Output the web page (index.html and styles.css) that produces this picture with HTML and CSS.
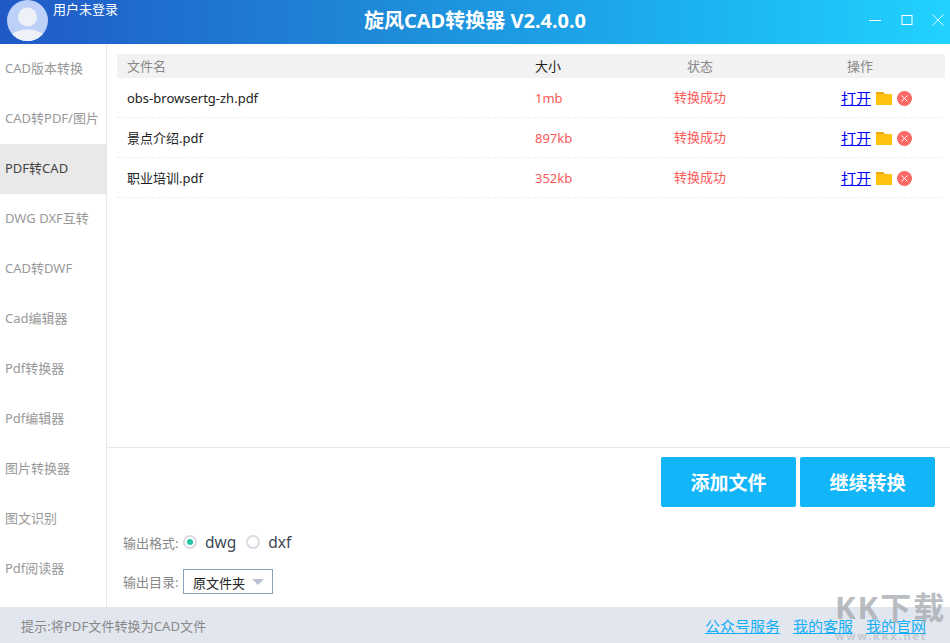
FILE: index.html
```html
<!DOCTYPE html>
<html lang="zh">
<head>
<meta charset="utf-8">
<title>旋风CAD转换器</title>
<link rel="stylesheet" href="styles.css">
</head>
<body>
<div class="app">
  <header class="titlebar">
    <div class="user">
      <svg class="avatar" viewBox="0 0 41 41"><defs><clipPath id="c"><circle cx="20.5" cy="20.5" r="20.5"/></clipPath></defs><circle cx="20.5" cy="20.5" r="20.5" fill="#bcd0f8"/><g clip-path="url(#c)"><circle cx="20.5" cy="17" r="9.5" fill="#eef2f8"/><ellipse cx="20.5" cy="38" rx="17" ry="8.5" fill="#eef2f8"/></g></svg>
      <span class="username">用户未登录</span>
    </div>
    <h1 class="apptitle">旋风CAD转换器 V2.4.0.0</h1>
    <div class="winctl">
      <svg class="wicon" viewBox="0 0 12 12"><path d="M0 6.5H12" stroke="#fff" fill="none"/></svg>
      <svg class="wicon" viewBox="0 0 12 12"><rect x="1" y="1.5" width="10" height="9" stroke="#fff" fill="none"/></svg>
      <svg class="wicon" viewBox="0 0 12 12"><path d="M0.5 .5L11.5 11.5M11.5 .5L.5 11.5" stroke="#fff" fill="none" stroke-width=".8"/></svg>
    </div>
  </header>
  <div class="body">
    <nav class="sidebar">
      <div class="navitem">CAD版本转换</div>
      <div class="navitem">CAD转PDF/图片</div>
      <div class="navitem active">PDF转CAD</div>
      <div class="navitem">DWG DXF互转</div>
      <div class="navitem">CAD转DWF</div>
      <div class="navitem">Cad编辑器</div>
      <div class="navitem">Pdf转换器</div>
      <div class="navitem">Pdf编辑器</div>
      <div class="navitem">图片转换器</div>
      <div class="navitem">图文识别</div>
      <div class="navitem">Pdf阅读器</div>
    </nav>
    <main class="main">
      <section class="files">
        <div class="thead">
          <span class="c-name">文件名</span>
          <span class="c-size dark">大小</span>
          <span class="c-state">状态</span>
          <span class="c-op">操作</span>
        </div>
        <div class="row">
          <span class="c-name">obs-browsertg-zh.pdf</span>
          <span class="c-size red">1mb</span>
          <span class="c-state red">转换成功</span>
          <span class="actions"><a class="open" href="#">打开</a><svg class="folder" viewBox="0 0 16 13"><path d="M0 0H7L9 2H16V13H0Z" fill="#ffc20e"/><path d="M0 0H7L9 2H0Z" fill="#eaa90a"/></svg><svg class="del" viewBox="0 0 15 15"><circle cx="7.5" cy="7.5" r="7.5" fill="#fb6a64"/><path d="M4.5 4.5L10.5 10.5M10.5 4.5L4.5 10.5" stroke="#fff"/></svg></span>
        </div>
        <div class="row">
          <span class="c-name">景点介绍.pdf</span>
          <span class="c-size red">897kb</span>
          <span class="c-state red">转换成功</span>
          <span class="actions"><a class="open" href="#">打开</a><svg class="folder" viewBox="0 0 16 13"><path d="M0 0H7L9 2H16V13H0Z" fill="#ffc20e"/><path d="M0 0H7L9 2H0Z" fill="#eaa90a"/></svg><svg class="del" viewBox="0 0 15 15"><circle cx="7.5" cy="7.5" r="7.5" fill="#fb6a64"/><path d="M4.5 4.5L10.5 10.5M10.5 4.5L4.5 10.5" stroke="#fff"/></svg></span>
        </div>
        <div class="row">
          <span class="c-name">职业培训.pdf</span>
          <span class="c-size red">352kb</span>
          <span class="c-state red">转换成功</span>
          <span class="actions"><a class="open" href="#">打开</a><svg class="folder" viewBox="0 0 16 13"><path d="M0 0H7L9 2H16V13H0Z" fill="#ffc20e"/><path d="M0 0H7L9 2H0Z" fill="#eaa90a"/></svg><svg class="del" viewBox="0 0 15 15"><circle cx="7.5" cy="7.5" r="7.5" fill="#fb6a64"/><path d="M4.5 4.5L10.5 10.5M10.5 4.5L4.5 10.5" stroke="#fff"/></svg></span>
        </div>
      </section>
      <section class="panel">
        <div class="buttons">
          <button class="btn">添加文件</button>
          <button class="btn">继续转换</button>
        </div>
        <div class="opt format">
          <span class="optlabel">输出格式:</span>
          <span class="radio on"></span><span class="rlabel">dwg</span>
          <span class="radio"></span><span class="rlabel">dxf</span>
        </div>
        <div class="opt dir">
          <span class="optlabel">输出目录:</span>
          <span class="select">原文件夹<i class="caret"></i></span>
        </div>
      </section>
    </main>
  </div>
  <footer class="footer">
    <span class="hint">提示:将PDF文件转换为CAD文件</span>
    <div class="links"><a href="#">公众号服务</a><a href="#">我的客服</a><a href="#">我的官网</a></div>
    <div class="watermark"><span class="wm-big">KK下载</span><span class="wm-small">www.kkx.net</span></div>
  </footer>
</div>
</body>
</html>
```
FILE: styles.css
```css
* { box-sizing: border-box; }
html, body { margin: 0; padding: 0; }
body { font-family: "Noto Sans", "Noto Sans CJK SC", sans-serif; background: #fff; }
.app { width: 950px; height: 643px; display: flex; flex-direction: column; overflow: hidden; position: relative; }

.titlebar { height: 44px; flex: none; display: flex; align-items: center; position: relative; background: linear-gradient(90deg, #2059c6 0%, #1e8ad8 40%, #1cb4f2 75%, #21d2ff 100%); color: #fff; }
.user { display: flex; align-items: flex-start; padding-left: 7px; height: 44px; }
.avatar { width: 41px; height: 41px; flex: none; }
.username { font-size: 13px; line-height: 18px; margin-left: 5px; }
.apptitle { position: absolute; left: 0; right: 0; top: 0; margin: 0; text-align: center; font-size: 20px; line-height: 42px; font-weight: 700; }
.winctl { margin-left: auto; display: flex; gap: 19.5px; padding-right: 6px; margin-bottom: 4px; position: relative; }
.wicon { width: 12px; height: 12px; display: block; }

.body { flex: 1; display: flex; min-height: 0; }
.sidebar { width: 107px; flex: none; border-right: 1px solid #e8e8e8; }
.navitem { height: 50px; line-height: 49px; padding-left: 5px; font-size: 13px; color: #999; white-space: nowrap; }
.navitem.active { background: #e9e9e9; color: #444; }

.main { flex: 1; display: flex; flex-direction: column; min-width: 0; }
.files { flex: 1; padding: 10px 5px 0 10px; }
.thead { height: 24px; background: #f2f2f2; display: flex; align-items: center; font-size: 13px; color: #888; line-height: 20px; }
.row { height: 40px; display: flex; align-items: center; font-size: 13px; line-height: 20px; color: #222; border-bottom: 1px dashed #eee; margin-right: 3px; }
.c-name { width: 418px; padding-left: 10px; flex: none; }
.c-size { width: 124px; flex: none; }
.c-state { width: 82px; flex: none; text-align: center; }
.row .c-state { padding-bottom: 2px; }
.c-op { flex: none; padding-left: 106px; }
.dark { color: #222; }
.red { color: #fb5a5a; }
.actions { display: flex; align-items: center; padding-left: 100px; flex: none; }
.open { color: #0000ff; font-size: 15px; text-decoration: underline; }
.folder { width: 16px; height: 13px; margin-left: 5px; margin-top: 1px; }
.del { width: 15px; height: 15px; margin-left: 5px; margin-top: 1px; }

.panel { height: 160px; flex: none; border-top: 1px solid #e8e8e8; }
.buttons { display: flex; justify-content: flex-end; gap: 4px; padding: 9px 15px 0 0; }
.btn { width: 135px; height: 50px; border: 0; border-radius: 2px; background: #13b5f9; color: #fff; font: 700 19px "Noto Sans", "Noto Sans CJK SC", sans-serif; padding: 0; }
.opt { display: flex; align-items: center; padding-left: 16px; }
.format { margin-top: 20px; height: 30px; }
.dir { margin-top: 12px; height: 25px; }
.optlabel { font-size: 13px; color: #888; width: 60px; flex: none; white-space: nowrap; }
.radio { width: 14px; height: 14px; border-radius: 50%; border: 2px solid #d8dce3; background: #fff; flex: none; position: relative; }
.radio.on::after { content: ""; position: absolute; left: 2px; top: 2px; width: 6px; height: 6px; border-radius: 50%; background: #26c6a6; }
.rlabel { font-size: 15.5px; color: #3c4a55; margin: 0 10px 0 8px; }
.select { width: 90px; height: 25px; border: 1px solid #8da2c0; font-size: 13px; color: #222; padding: 3px 0 0 9px; line-height: 20px; position: relative; display: block; }
.caret { position: absolute; right: 8px; top: 9px; border-left: 6px solid transparent; border-right: 6px solid transparent; border-top: 6px solid #b9c2cf; }

.footer { height: 36px; flex: none; background: #e2e6ef; display: flex; align-items: center; padding: 0 24px 0 21px; position: relative; }
.hint { font-size: 13px; color: #888; letter-spacing: .1px; }
.links { margin-left: auto; display: flex; gap: 13px; font-size: 15px; }
.links a { color: #14aef5; text-decoration: underline; }
.watermark { position: absolute; left: 835px; top: -18px; width: 112px; display: flex; flex-direction: column; color: #a9adb2; opacity: .8; pointer-events: none; }
.wm-big { font-size: 31px; font-weight: 700; line-height: 36px; letter-spacing: 2px; white-space: nowrap; }
.wm-small { font-size: 11px; font-weight: 700; line-height: 14px; letter-spacing: 1.8px; margin-top: 4px; opacity: .6; white-space: nowrap; }
```
